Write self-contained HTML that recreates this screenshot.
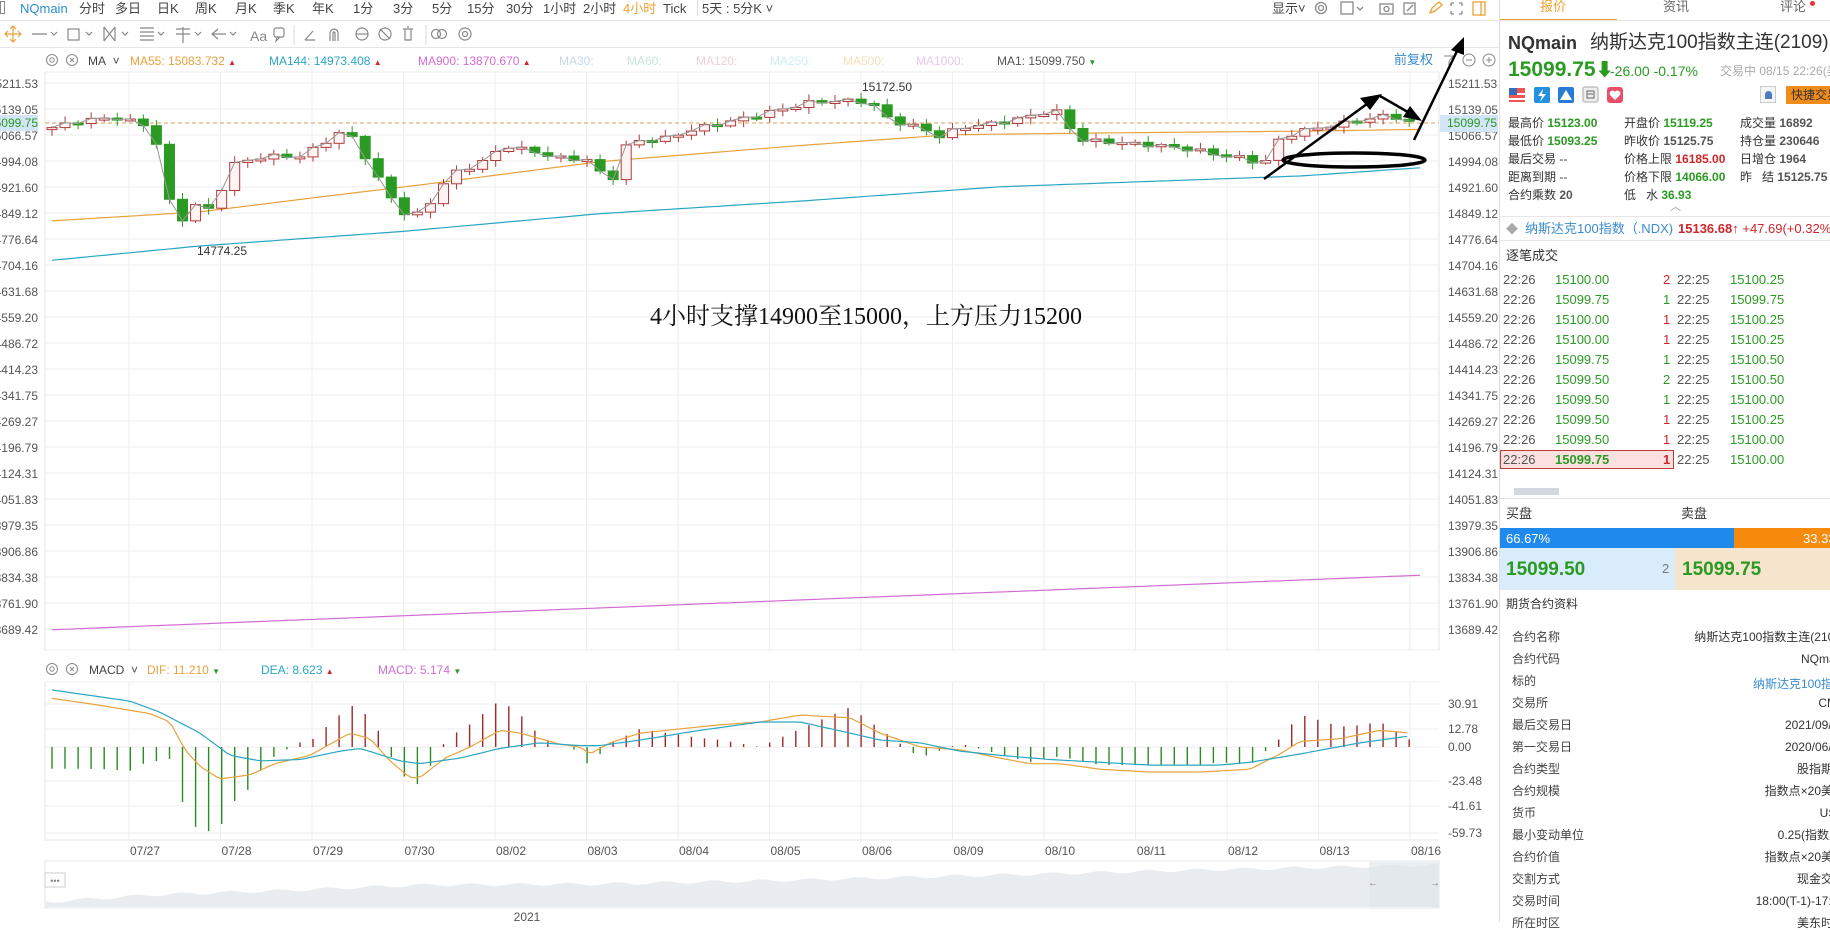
<!DOCTYPE html>
<html><head><meta charset="utf-8">
<style>
*{margin:0;padding:0;box-sizing:border-box}
body{width:1830px;height:922px;overflow:hidden;background:#fff;font-family:"Liberation Sans","Noto Sans CJK SC",sans-serif;font-size:12px;color:#333;position:relative}
.a{position:absolute;white-space:nowrap;line-height:1}
.g{color:#2b9a22}.r{color:#d0252a}.gr{color:#666}
.rp .row span{position:absolute}
</style></head><body>

<div class="a" style="left:0;top:1px;width:5px;height:13px;border:1px solid #888"></div>
<div class="a" style="top:2px;left:20px;font-size:13px;color:#2b8fd0">NQmain</div>
<div class="a" style="top:2px;left:79px;font-size:13px;color:#444">分时</div>
<div class="a" style="top:2px;left:115px;font-size:13px;color:#444">多日</div>
<div class="a" style="top:2px;left:157px;font-size:13px;color:#444">日K</div>
<div class="a" style="top:2px;left:195px;font-size:13px;color:#444">周K</div>
<div class="a" style="top:2px;left:235px;font-size:13px;color:#444">月K</div>
<div class="a" style="top:2px;left:273px;font-size:13px;color:#444">季K</div>
<div class="a" style="top:2px;left:312px;font-size:13px;color:#444">年K</div>
<div class="a" style="top:2px;left:353px;font-size:13px;color:#444">1分</div>
<div class="a" style="top:2px;left:393px;font-size:13px;color:#444">3分</div>
<div class="a" style="top:2px;left:432px;font-size:13px;color:#444">5分</div>
<div class="a" style="top:2px;left:467px;font-size:13px;color:#444">15分</div>
<div class="a" style="top:2px;left:506px;font-size:13px;color:#444">30分</div>
<div class="a" style="top:2px;left:543px;font-size:13px;color:#444">1小时</div>
<div class="a" style="top:2px;left:583px;font-size:13px;color:#444">2小时</div>
<div class="a" style="top:2px;left:623px;font-size:13px;color:#f0a030">4小时</div>
<div class="a" style="top:2px;left:663px;font-size:13px;color:#444">Tick</div>
<div class="a" style="top:0;left:697px;width:1px;height:16px;background:#ddd"></div>
<div class="a" style="top:2px;left:702px;font-size:13px;color:#444">5天 : 5分K ˅</div>
<div class="a" style="top:2px;left:1272px;font-size:13px;color:#444">显示˅</div>
<svg class="a" style="left:1310px;top:0" width="190" height="20" fill="none" stroke-width="1.3">
<circle cx="11" cy="8" r="5.5" stroke="#888"/><circle cx="11" cy="8" r="2.5" stroke="#888"/>
<rect x="31" y="2" width="12" height="12" stroke="#888"/><path d="M47 7l3 3 3-3" stroke="#888"/>
<rect x="70" y="4" width="13" height="10" stroke="#888"/><circle cx="76.5" cy="9" r="2.5" stroke="#888"/>
<rect x="94" y="3" width="11" height="11" stroke="#888"/><path d="M97 11l6-6" stroke="#888"/>
<path d="M120 13l2-5 7-6 3 3-7 6z" stroke="#f0a030"/>
<path d="M141 3h3M141 3v3M152 3h-3M152 3v3M141 14h3M141 14v-3M152 14h-3M152 14v-3" stroke="#888"/>
<rect x="163" y="2" width="12" height="13" stroke="#f0a030"/><path d="M171 2v13" stroke="#f0a030"/>
</svg>
<div class="a" style="left:0;top:20px;width:1500px;height:1px;background:#e6e6e6"></div>

<svg class="a" style="left:0;top:21px" width="480" height="26" fill="none" stroke="#888" stroke-width="1.2">
<path d="M13 5v16M5 13h16M10 8l3-3 3 3M10 18l3 3 3-3M8 10l-3 3 3 3M18 10l3 3-3 3" stroke="#e8a23c"/>
<path d="M32 13h15M51 11l3 3 3-3"/>
<rect x="68" y="8" width="11" height="11"/><path d="M86 11l3 3 3-3"/>
<path d="M104 6l11 14M115 6l-11 14M104 6v14M115 6v14M122 11l3 3 3-3"/>
<path d="M140 7h14M140 11h14M140 15h14M140 19h14M158 11l3 3 3-3"/>
<path d="M176 8h14M183 6v16M176 13h14M195 11l3 3 3-3"/>
<path d="M212 13h14M218 8l-6 5 6 5M230 11l3 3 3-3"/>
<rect x="274" y="7" width="10" height="9" rx="2"/><path d="M277 16l-1 4 4-4"/>
<path d="M294 4v20" stroke="#e0e0e0"/>
<path d="M305 19h10M305 19l8-9"/>
<path d="M330 20v-8a4 4 0 0 1 8 0v8M333 20v-8a1 1 0 0 1 2 0v8"/>
<circle cx="362" cy="13" r="6"/><path d="M356 13h12"/>
<circle cx="385" cy="13" r="6"/><path d="M380 8l10 10"/>
<path d="M403 8h10M405 8v11h6V8M407 6h2"/>
<path d="M426 4v20" stroke="#e0e0e0"/>
<circle cx="436" cy="13" r="4.5"/><circle cx="442" cy="13" r="4.5"/>
<circle cx="465" cy="13" r="6"/><circle cx="465" cy="13" r="2.5"/>
</svg>
<div class="a" style="top:29px;left:250px;font-size:14px;color:#888">Aa</div>
<div class="a" style="left:0;top:47px;width:1500px;height:1px;background:#e6e6e6"></div>

<svg class="a" style="left:45px;top:53px" width="40" height="16" fill="none" stroke="#888" stroke-width="1"><circle cx="7" cy="7" r="5.5"/><circle cx="7" cy="7" r="2.2"/><circle cx="27" cy="7" r="5.5"/><path d="M25 5l4 4M29 5l-4 4"/></svg>
<div class="a" style="top:55px;left:88px;font-size:12px;color:#444">MA&nbsp;&nbsp;˅</div>
<div class="a" style="top:55px;left:130px;font-size:12px;color:#e8a23c">MA55: 15083.732 <span class="r" style="font-size:8px">▲</span></div>
<div class="a" style="top:55px;left:269px;font-size:12px;color:#2aa6c2">MA144: 14973.408 <span class="r" style="font-size:8px">▲</span></div>
<div class="a" style="top:55px;left:418px;font-size:12px;color:#d36bd5">MA900: 13870.670 <span class="r" style="font-size:8px">▲</span></div>
<div class="a" style="top:55px;left:559px;font-size:12px;color:#c5d8ec">MA30:</div>
<div class="a" style="top:55px;left:627px;font-size:12px;color:#c8e4dc">MA60:</div>
<div class="a" style="top:55px;left:696px;font-size:12px;color:#f2cfd4">MA120:</div>
<div class="a" style="top:55px;left:770px;font-size:12px;color:#cdeef3">MA250:</div>
<div class="a" style="top:55px;left:843px;font-size:12px;color:#f5dfb8">MA500:</div>
<div class="a" style="top:55px;left:916px;font-size:12px;color:#e7c9e9">MA1000:</div>
<div class="a" style="top:55px;left:997px;font-size:12px;color:#555">MA1: 15099.750 <span class="g" style="font-size:8px">▼</span></div>
<div class="a" style="top:53px;left:1394px;font-size:13px;color:#3a8cd0">前复权</div>
<svg class="a" style="left:1440px;top:52px" width="60" height="16" fill="none" stroke="#888"><path d="M4 4h9l-4 5v5"/><circle cx="29" cy="8" r="6"/><path d="M26 8h6"/><circle cx="49" cy="8" r="6"/><path d="M46 8h6M49 5v6"/></svg>

<svg class="a" style="left:45px;top:662px" width="40" height="16" fill="none" stroke="#888" stroke-width="1"><circle cx="7" cy="7" r="5.5"/><circle cx="7" cy="7" r="2.2"/><circle cx="27" cy="7" r="5.5"/><path d="M25 5l4 4M29 5l-4 4"/></svg>
<div class="a" style="top:664px;left:89px;font-size:12px;color:#444">MACD&nbsp;&nbsp;˅</div>
<div class="a" style="top:664px;left:147px;font-size:12px;color:#e8a23c">DIF: 11.210 <span class="g" style="font-size:8px">▼</span></div>
<div class="a" style="top:664px;left:261px;font-size:12px;color:#2aa6c2">DEA: 8.623 <span class="r" style="font-size:8px">▲</span></div>
<div class="a" style="top:664px;left:378px;font-size:12px;color:#d36bd5">MACD: 5.174 <span class="g" style="font-size:8px">▼</span></div>

<svg id="ch" class="a" style="left:0;top:0" width="1500" height="922" font-family="Liberation Sans, sans-serif"></svg>

<div class="a" style="left:650px;top:305px;font-family:'Liberation Serif','Noto Serif CJK SC',serif;font-size:24px;color:#111">4小时支撑14900至15000，上方压力15200</div>

<div class="a" style="left:1499px;top:0;width:1px;height:922px;background:#ddd"></div>
<div class="rp a" style="left:1500px;top:0;width:330px;height:922px">
 <div class="a" style="left:40px;top:0;font-size:13px;color:#f0a030">报价</div>
 <div class="a" style="left:163px;top:0;font-size:13px;color:#666">资讯</div>
 <div class="a" style="left:280px;top:0;font-size:13px;color:#666">评论</div>
 <div class="a" style="left:310px;top:1px;width:5px;height:5px;border-radius:3px;background:#e33"></div>
 <div class="a" style="left:0;top:19px;width:117px;height:2px;background:#f0a030"></div>
 <div class="a" style="left:0;top:20px;width:330px;height:1px;background:#e6e6e6"></div>
 <div class="a" style="left:8px;top:34px;font-size:18px;font-weight:bold;color:#333">NQmain</div>
 <div class="a" style="left:90px;top:33px;font-size:19px;color:#333">纳斯达克100指数主连(2109)</div>
 <div class="a" style="left:8px;top:59px;font-size:21px;font-weight:bold" ><span class="g">15099.75</span><span class="g" style="font-size:18px">⬇</span></div>
 <div class="a g" style="left:110px;top:64px;font-size:14px">-26.00 -0.17%</div>
 <div class="a" style="left:220px;top:65px;font-size:12px;color:#aaa">交易中 08/15 22:26(美</div>
 <svg class="a" style="left:8px;top:86px" width="120" height="18">
  <rect x="1" y="2" width="16" height="14" fill="#e55"/><rect x="1" y="7" width="16" height="2" fill="#fff"/><rect x="1" y="12" width="16" height="2" fill="#fff"/><rect x="1" y="2" width="8" height="7" fill="#3a6ab8"/>
  <rect x="26" y="1" width="16" height="16" rx="2" fill="#2590e0"/><path d="M35 3l-5 7h4l-2 6 6-8h-4z" fill="#fff"/>
  <rect x="50" y="1" width="16" height="16" rx="2" fill="#2a7ad8"/><path d="M58 4l6 10H52z" fill="#fff"/>
  <rect x="75" y="1" width="15" height="15" rx="2" fill="#eee" stroke="#aaa"/><path d="M79 5h7v7h-7zM80 8h5" stroke="#666" fill="none"/>
  <rect x="99" y="1" width="16" height="16" rx="3" fill="#e8506a"/><path d="M107 14l-5-5a2.5 2.5 0 0 1 5-3 2.5 2.5 0 0 1 5 3z" fill="#fff"/>
 </svg>
 <div class="a" style="left:260px;top:86px;width:16px;height:17px;border:1px solid #ccc;background:#f4f4f4"></div>
 <div class="a" style="left:265px;top:91px;width:7px;height:8px;border-radius:4px 4px 0 0;background:#4a7cc0"></div>
 <div class="a" style="left:286px;top:86px;width:44px;height:18px;background:#f08c1a;color:#333;font-size:12px;padding:3px 0 0 5px">快捷交易</div>
 <div class="row">
  <div class="a" style="left:8px;top:117px;font-size:12px">最高价 <b class="g">15123.00</b></div>
  <div class="a" style="left:124px;top:117px;font-size:12px">开盘价 <b class="g">15119.25</b></div>
  <div class="a" style="left:240px;top:117px;font-size:12px">成交量 <b style="color:#555">16892</b></div>
  <div class="a" style="left:8px;top:135px;font-size:12px">最低价 <b class="g">15093.25</b></div>
  <div class="a" style="left:124px;top:135px;font-size:12px">昨收价 <b style="color:#555">15125.75</b></div>
  <div class="a" style="left:240px;top:135px;font-size:12px">持仓量 <b style="color:#555">230646</b></div>
  <div class="a" style="left:8px;top:153px;font-size:12px">最后交易 --</div>
  <div class="a" style="left:124px;top:153px;font-size:12px">价格上限 <b class="r">16185.00</b></div>
  <div class="a" style="left:240px;top:153px;font-size:12px">日增仓 <b style="color:#555">1964</b></div>
  <div class="a" style="left:8px;top:171px;font-size:12px">距离到期 --</div>
  <div class="a" style="left:124px;top:171px;font-size:12px">价格下限 <b class="g">14066.00</b></div>
  <div class="a" style="left:240px;top:171px;font-size:12px">昨&nbsp;&nbsp;&nbsp;结 <b style="color:#555">15125.75</b></div>
  <div class="a" style="left:8px;top:189px;font-size:12px">合约乘数 <b style="color:#555">20</b></div>
  <div class="a" style="left:124px;top:189px;font-size:12px">低&nbsp;&nbsp;&nbsp;水 <b class="g">36.93</b></div>
 </div>
 <div class="a" style="left:170px;top:202px;font-size:11px;color:#999">︿</div>
 <div class="a" style="left:0;top:216px;width:330px;height:1px;background:#e6e6e6"></div>
 <div class="a" style="left:6px;top:223px;font-size:12px;color:#aaa">◆</div>
 <div class="a" style="left:25px;top:222px;font-size:13px;color:#3a8cd0">纳斯达克100指数（.NDX)</div>
 <div class="a" style="left:178px;top:222px;font-size:13px"><b class="r">15136.68</b><span class="r">↑ +47.69(+0.32%)</span></div>
 <div class="a" style="left:0;top:240px;width:330px;height:1px;background:#e6e6e6"></div>
 <div class="a" style="left:6px;top:249px;font-size:13px;color:#333">逐笔成交</div>
 <div id="trades"></div>
 <div class="a" style="left:14px;top:488px;width:45px;height:7px;background:#d4d9e0"></div>
 <div class="a" style="left:0;top:498px;width:330px;height:1px;background:#e0e0e0"></div>
 <div class="a" style="left:6px;top:507px;font-size:13px">买盘</div>
 <div class="a" style="left:181px;top:507px;font-size:13px">卖盘</div>
 <div class="a" style="left:0;top:528px;width:234px;height:20px;background:#1f8aeb"></div>
 <div class="a" style="left:234px;top:528px;width:96px;height:20px;background:#f68a0c"></div>
 <div class="a" style="left:6px;top:532px;font-size:13px;color:#fff">66.67%</div>
 <div class="a" style="left:303px;top:532px;font-size:13px;color:#fff">33.33</div>
 <div class="a" style="left:0;top:548px;width:175px;height:42px;background:#d9ecfb"></div>
 <div class="a" style="left:175px;top:548px;width:155px;height:42px;background:#f7e4cd"></div>
 <div class="a g" style="left:6px;top:560px;font-size:19px;font-weight:bold">15099.50</div>
 <div class="a" style="left:162px;top:562px;font-size:13px;color:#777">2</div>
 <div class="a g" style="left:182px;top:560px;font-size:19px;font-weight:bold">15099.75</div>
 <div class="a" style="left:6px;top:598px;font-size:12px">期货合约资料</div>
 <div id="info"></div>
</div>

<script>
(function(){
var S=document.getElementById('ch'),h='';
function L(x1,y1,x2,y2,c,w,ex){h+='<line x1="'+x1+'" y1="'+y1+'" x2="'+x2+'" y2="'+y2+'" stroke="'+c+'" stroke-width="'+(w||1)+'" '+(ex||'')+'/>';}
function T(x,y,t,c,a,fs){h+='<text x="'+x+'" y="'+y+'" fill="'+(c||'#555')+'" font-size="'+(fs||12)+'" text-anchor="'+(a||'start')+'">'+t+'</text>';}
var labs=['15211.53','15139.05','15066.57','14994.08','14921.60','14849.12','14776.64','14704.16','14631.68','14559.20','14486.72','14414.23','14341.75','14269.27','14196.79','14124.31','14051.83','13979.35','13906.86','13834.38','13761.90','13689.42'];
for(var i=0;i<labs.length;i++){var y=84+i*26;L(45,y-1,1439,y-1,'#eeeeee');T(1448,y+4,labs[i],'#555');T(38,y+4,labs[i],'#555','end');}
L(45,72,1439,72,'#eee');L(45,72,45,650,'#e6e6e6');L(1439,72,1439,650,'#e6e6e6');L(45,650,1439,650,'#eee');
for(var k=0;k<15;k++){var gx=1410-k*91.5;if(gx>45){L(gx,72,gx,650,'#eeeeee');L(gx,682,gx,840,'#eeeeee');}}
var ml=[['30.91',704],['12.78',729],['0.00',747],['-23.48',781],['-41.61',806],['-59.73',833]];
L(45,682,1439,682,'#eee');
ml.forEach(function(m){L(45,m[1],1439,m[1],'#eeeeee');T(1448,m[1]+4,m[0],'#555');});
L(45,840,1439,840,'#e6e6e6');L(45,682,45,840,'#e6e6e6');
var dates=['07/27','07/28','07/29','07/30','08/02','08/03','08/04','08/05','08/06','08/09','08/10','08/11','08/12','08/13','08/16'];
for(var k=0;k<15;k++){var gx=129+k*91.5;T(gx+16,855,dates[k],'#555','middle');}
function py(p){return 84+(15211.53-p)*0.3587;}
function interp(pts,x){for(var i=0;i<pts.length-1;i++){if(x<=pts[i+1][0]){var t=(x-pts[i][0])/(pts[i+1][0]-pts[i][0]);return pts[i][1]+t*(pts[i+1][1]-pts[i][1]);}}return pts[pts.length-1][1];}
function line(pts,c,w){var d='';for(var x=52;x<=1420;x+=6){d+=(d?'L':'M')+x+' '+py(interp(pts,x)).toFixed(1);}h+='<path d="'+d+'" stroke="'+c+'" stroke-width="'+(w||1.2)+'" fill="none"/>';}
line([[52,14830],[200,14855],[330,14900],[420,14930],[600,14995],[800,15040],[950,15070],[1100,15075],[1300,15080],[1420,15085]],'#e8a23c');
line([[52,14720],[200,14760],[400,14800],[600,14850],[800,14885],[1000,14925],[1200,14945],[1300,14955],[1420,14978]],'#2aa6c2');
line([[52,13690],[1420,13842]],'#d36bd5');
L(45,123,1439,123,'#d9a050',1,'stroke-dasharray="4,3"');
var kp=[[52,15090],[82,15110],[117,15118],[135,15105],[152,15090],[165,14960],[175,14790],[190,14880],[210,14860],[235,14990],[265,15010],[300,15010],[320,15040],[338,15075],[355,15060],[375,14960],[400,14860],[412,14835],[430,14880],[450,14960],[480,14990],[505,15040],[530,15025],[560,15005],[590,15000],[610,14930],[628,15050],[665,15060],[700,15090],[735,15110],[780,15140],[810,15160],[840,15165],[870,15162],[890,15110],[920,15090],[940,15065],[960,15090],[990,15100],[1020,15115],[1055,15140],[1080,15055],[1110,15050],[1150,15042],[1175,15035],[1200,15025],[1225,15010],[1245,15005],[1263,14985],[1280,15060],[1300,15080],[1340,15100],[1370,15115],[1390,15125],[1405,15110],[1420,15100]];
var prev=15085,cl=[];
for(var i=0;i<106;i++){var x=52+i*13.05;if(x>1421)break;var c=interp(kp,x)+Math.sin(i*2.3)*6;var o=prev;var hi=Math.max(o,c)+4+Math.abs(Math.sin(i*1.7))*14;var lo=Math.min(o,c)-4-Math.abs(Math.cos(i*1.3))*14;
var up=c>=o,col=up?'#b23a3a':'#2b9a22';
L(x,py(hi),x,py(lo),col,1);
var y1=py(Math.max(o,c)),y2=py(Math.min(o,c));if(y2-y1<2)y2=y1+2;
h+='<rect x="'+(x-5)+'" y="'+y1.toFixed(1)+'" width="10" height="'+(y2-y1).toFixed(1)+'" fill="'+(up?'#fff3f3':'#2b9a22')+'" stroke="'+col+'" stroke-width="1"/>';
cl.push([x,c]);prev=c;}
var d='';cl.forEach(function(p){d+=(d?'L':'M')+p[0].toFixed(1)+' '+py(p[1]).toFixed(1);});h+='<path d="'+d+'" stroke="#999" stroke-width="1" fill="none"/>';
T(887,91,'15172.50','#333','middle');T(222,255,'14774.25','#333','middle');
h+='<rect x="0" y="115" width="38" height="16" fill="#d3e6f8"/>';T(38,127,'15099.75','#2b9a22','end');
h+='<rect x="1440" y="115" width="58" height="17" fill="#d3e6f8"/>';T(1447,127,'15099.75','#2b9a22');
function my(v){return 747-v*1.39;}
var dif=[[52,35],[100,30],[150,24],[170,18],[185,-2],[200,-14],[220,-23],[250,-20],[275,-12],[310,-6],[335,4],[350,10],[370,6],[390,-10],[410,-22],[420,-22],[445,-8],[470,0],[500,12],[520,10],[560,2],[580,0],[590,-5],[610,3],[640,10],[680,13],[720,16],[760,18],[800,23],[850,21],[880,10],[920,0],[960,-2],[1000,-8],[1030,-12],[1060,-12],[1100,-16],[1150,-18],[1200,-18],[1250,-16],[1280,-5],[1300,4],[1340,6],[1380,12],[1410,10]];
var dea=[[52,41],[130,33],[160,25],[200,10],[230,-6],[260,-10],[300,-9],[340,-3],[360,-1],[400,-10],[420,-12],[460,-8],[500,-1],[540,3],[580,1],[600,1],[640,5],[700,12],[760,18],[800,18],[850,10],[880,5],[920,3],[960,-3],[1000,-6],[1050,-9],[1100,-11],[1150,-13],[1220,-13],[1250,-11],[1300,-5],[1360,3],[1410,8]];
function mline(pts,c){var d='';for(var x=52;x<=1410;x+=5){d+=(d?'L':'M')+x+' '+my(interp(pts,x)).toFixed(1);}h+='<path d="'+d+'" stroke="'+c+'" stroke-width="1.2" fill="none"/>';}
for(var x=52;x<=1410;x+=13.05){var v=(interp(dif,x)-interp(dea,x))*2.6;L(x.toFixed(1),747,x.toFixed(1),my(v).toFixed(1),v>=0?'#a02828':'#2b8a22',1.4);}
mline(dif,'#e8a23c');mline(dea,'#2aa6c2');
h+='<rect x="45" y="861" width="1394" height="47" fill="#fff" stroke="#e6e6e6"/>';
var nd='M46 907';for(var x=46;x<=1438;x+=8){var v=interp([[46,902],[150,895],[300,890],[420,885],[600,884],[800,880],[1000,875],[1200,870],[1438,865]],x)+Math.sin(x*0.13)*1.5;nd+='L'+x+' '+v.toFixed(1);}nd+='L1438 907Z';
h+='<path d="'+nd+'" fill="#e9edf1"/>';
h+='<rect x="1369" y="862" width="70" height="45" fill="#dfe4ea" opacity=".6"/>';
h+='<rect x="45" y="873" width="20" height="14" fill="#fff" stroke="#ccc"/>';T(55,884,'•••','#888','middle',9);
T(1373,886,'←','#888','middle',10);T(1435,886,'→','#888','middle',10);
T(527,921,'2021','#555','middle');
h+='<ellipse cx="1354" cy="160" rx="71" ry="7" fill="none" stroke="#000" stroke-width="3.5"/>';
h+='<path d="M1264 179L1371 101" stroke="#000" stroke-width="2.5"/><path d="M1382 94L1360 98L1370 110Z" fill="#000"/>';
h+='<path d="M1380 96L1413 115" stroke="#000" stroke-width="2.5"/><path d="M1422 121L1403 117L1410 106Z" fill="#000"/>';
h+='<path d="M1414 140L1459 47" stroke="#000" stroke-width="2.5"/><path d="M1464 37L1451 50L1464 55Z" fill="#000"/>';
S.innerHTML=h;
var tr=[['15100.00','2','r','15100.25'],['15099.75','1','g','15099.75'],['15100.00','1','r','15100.25'],['15100.00','1','r','15100.25'],['15099.75','1','g','15100.50'],['15099.50','2','g','15100.50'],['15099.50','1','g','15100.00'],['15099.50','1','r','15100.25'],['15099.50','1','r','15100.00'],['15099.75','1','r','15100.00']];
var t='';tr.forEach(function(r,i){var y=273+i*20;
if(i==9)t+='<div class="a" style="left:0;top:'+(y-3)+'px;width:174px;height:19px;background:#fbe0e0;border:1px solid #c03a3a"></div>';
var b=i==9?'font-weight:bold;':'';
t+='<div class="a" style="left:3px;top:'+y+'px;font-size:13px;color:#555">22:26</div><div class="a g" style="left:55px;top:'+y+'px;font-size:13px;'+b+'">'+r[0]+'</div><div class="a '+r[2]+'" style="left:163px;top:'+y+'px;font-size:13px;'+b+'">'+r[1]+'</div><div class="a" style="left:177px;top:'+y+'px;font-size:13px;color:#555">22:25</div><div class="a g" style="left:230px;top:'+y+'px;font-size:13px">'+r[3]+'</div>';});
document.getElementById('trades').innerHTML=t;
var inf=[['合约名称','纳斯达克100指数主连(2109)','#333'],['合约代码','NQmain','#333'],['标的','纳斯达克100指数','#3a8cd0'],['交易所','CME','#333'],['最后交易日','2021/09/17','#333'],['第一交易日','2020/06/19','#333'],['合约类型','股指期货','#333'],['合约规模','指数点×20美元','#333'],['货币','USD','#333'],['最小变动单位','0.25(指数点)','#333'],['合约价值','指数点×20美元','#333'],['交割方式','现金交割','#333'],['交易时间','18:00(T-1)-17:00','#333'],['所在时区','美东时间','#333']];
var s='';inf.forEach(function(r,i){var y=631+i*22;if(i==2)y+=3;
s+='<div class="a" style="left:12px;top:'+(i==2?y-3:y)+'px;font-size:12px;color:#444">'+r[0]+'</div><div class="a" style="left:145px;top:'+y+'px;width:200px;font-size:12px;color:'+r[2]+';text-align:right">'+r[1]+'</div>';});
document.getElementById('info').innerHTML=s;
})();
</script>
</body></html>
